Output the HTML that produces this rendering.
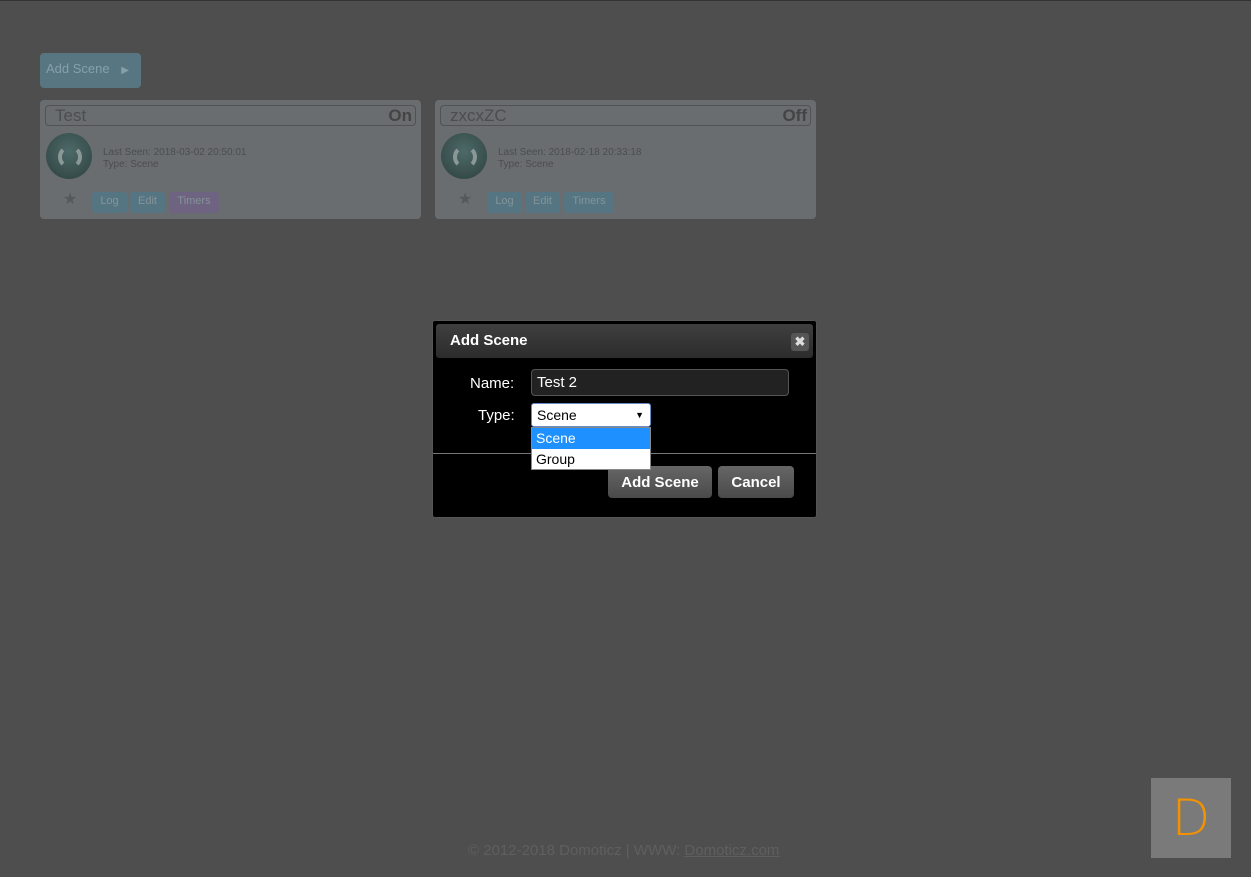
<!DOCTYPE html>
<html><head><meta charset="utf-8"><style>
body{margin:0;width:1251px;height:877px;background:#4e4e4e;font-family:"Liberation Sans",sans-serif;position:relative;overflow:hidden;border-top:1px solid #333;box-sizing:border-box}
.abs{position:absolute}
.addbtn{left:40px;top:52px;width:101px;height:35px;background:#587681;border-radius:4px;color:#86a0a9;font-size:13px;line-height:32px;padding-left:6px;box-sizing:border-box}
.card{top:99px;width:381px;height:119px;background:#6a6d6f;border-radius:4px}
.title{position:absolute;left:5px;top:5px;right:5px;height:21px;border:1px solid #505254;border-radius:4px;box-sizing:border-box;color:#4b4d4e;font-size:17px;line-height:20px;padding-left:9px}
.title b{position:absolute;right:3px;top:0;font-size:17px;color:#444}
.icon{position:absolute;left:6px;top:33px;width:46px;height:46px;border-radius:50%;background:radial-gradient(circle at 50% 40%,#4d6a68,#2d403f);}
.icon:after{content:"";position:absolute;left:12px;top:12px;width:16px;height:16px;border:4px solid #8a9896;border-radius:50%;border-top-color:transparent;border-bottom-color:transparent}
.info{position:absolute;left:63px;top:47px;font-size:10px;color:#4b4d4e;line-height:12px}
.b{position:absolute;top:92px;height:21px;border-radius:3px;font-size:11px;color:#849498;line-height:19px;text-align:center}
.star{position:absolute;left:23px;top:89px;color:#55595b;font-size:16px}
.dlg{left:432px;top:319px;width:383px;height:196px;background:#000;border:1px solid #555;border-radius:3px}
.hd{position:absolute;left:3px;top:3px;right:3px;height:34px;background:linear-gradient(#3f3f3f,#2c2c2c);border-radius:3px;color:#fff;font-weight:bold;font-size:15px;line-height:34px;padding-left:14px}
.x{position:absolute;right:4px;top:9px;width:18px;height:18px;background:#555;border-radius:3px;color:#ddd;font-size:13px;text-align:center;line-height:18px}
.lbl{position:absolute;color:#fff;font-size:15px}
.btn{position:absolute;top:145px;height:32px;background:linear-gradient(#666,#4a4a4a);border-radius:4px;color:#fff;font-weight:bold;font-size:15px;line-height:34px;text-align:center}
</style></head><body>
<div class="abs addbtn">Add Scene <span style="margin-left:8px;font-size:10px">▶</span></div>
<div class="abs card" style="left:40px">
 <div class="title">Test<b>On</b></div><div class="icon"></div>
 <div class="info">Last Seen: 2018-03-02 20:50:01<br>Type: Scene</div>
 <div class="star">★</div>
 <div class="b" style="left:52px;width:35px;background:#557583">Log</div>
 <div class="b" style="left:90px;width:35px;background:#557583">Edit</div>
 <div class="b" style="left:129px;width:50px;background:#6e6380">Timers</div>
</div>
<div class="abs card" style="left:435px">
 <div class="title">zxcxZC<b>Off</b></div><div class="icon"></div>
 <div class="info">Last Seen: 2018-02-18 20:33:18<br>Type: Scene</div>
 <div class="star">★</div>
 <div class="b" style="left:52px;width:35px;background:#557583">Log</div>
 <div class="b" style="left:90px;width:35px;background:#557583">Edit</div>
 <div class="b" style="left:129px;width:50px;background:#557583">Timers</div>
</div>
<div class="abs dlg">
 <div class="hd">Add Scene<div class="x">✖</div></div>
 <div class="lbl" style="left:37px;top:54px">Name:</div>
 <div class="abs" style="left:98px;top:48px;width:258px;height:27px;background:#222;border:1px solid #555;border-radius:4px;box-sizing:border-box;color:#fff;font-size:15px;line-height:25px;padding-left:5px">Test 2</div>
 <div class="lbl" style="left:45px;top:86px">Type:</div>
 <div class="abs" style="left:98px;top:82px;width:120px;height:24px;background:#fff;border:1px solid #6a8ac8;border-radius:3px;box-sizing:border-box;font-size:14px;line-height:22px;padding-left:5px">Scene<span style="position:absolute;right:6px;font-size:9px">▼</span></div>
 <div class="abs" style="left:0;right:0;top:132px;height:1px;background:#777"></div>
 <div class="btn" style="left:175px;width:104px">Add Scene</div>
 <div class="btn" style="left:285px;width:76px">Cancel</div>
 <div class="abs" style="left:98px;top:106px;width:120px;height:43px;background:#fff;border:1px solid #888;box-sizing:border-box;font-size:14px">
  <div style="background:#1e90ff;color:#fff;height:21px;line-height:20px;padding-left:4px">Scene</div>
  <div style="height:20px;line-height:20px;padding-left:4px">Group</div>
 </div>
</div>
<div class="abs" style="left:468px;top:841px;font-size:15px;color:#5f5f5f">© 2012-2018 Domoticz | WWW: <u>Domoticz.com</u></div>
<div class="abs" style="left:1151px;top:777px;width:80px;height:80px;background:#7a7a7a;color:#f39200;font-size:50px;text-align:center;line-height:80px;font-family:'DejaVu Sans',sans-serif;font-weight:200">D</div>
</body></html>
